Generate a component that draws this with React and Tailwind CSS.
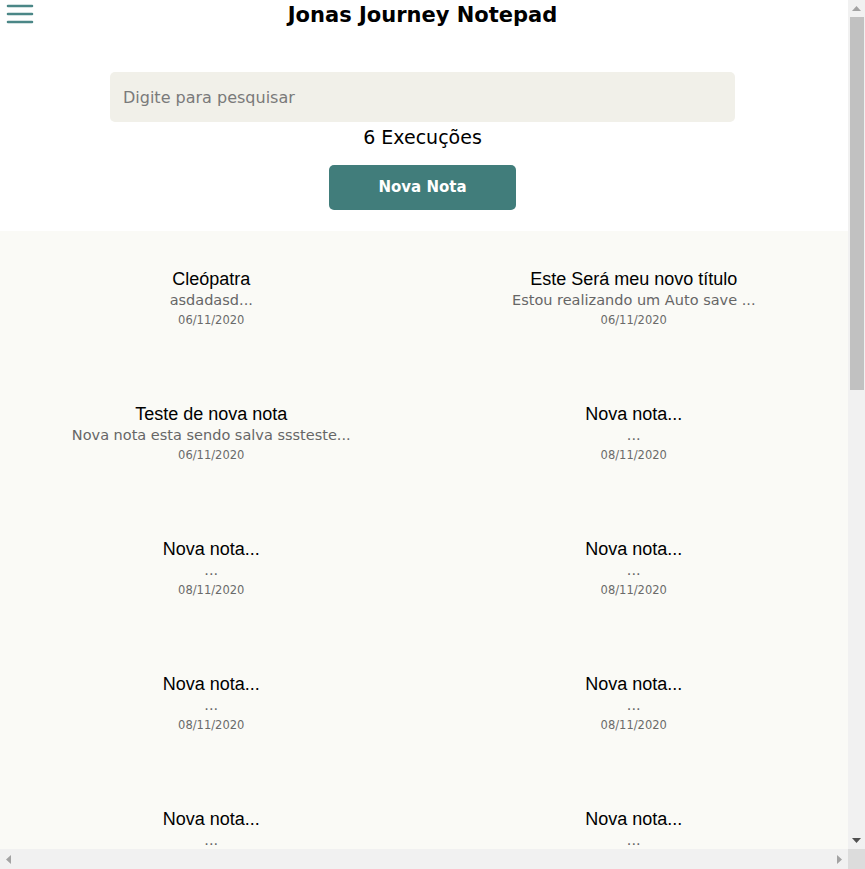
import { useState } from 'react';

const notes = [
  { id: 1, title: 'Cleópatra', body: 'asdadasd...', date: '06/11/2020' },
  { id: 2, title: 'Este Será meu novo título', body: 'Estou realizando um Auto save ...', date: '06/11/2020' },
  { id: 3, title: 'Teste de nova nota', body: 'Nova nota esta sendo salva sssteste...', date: '06/11/2020' },
  ...Array.from({ length: 19 }, (_, i) => ({
    id: i + 4,
    title: 'Nova nota...',
    body: '...',
    date: '08/11/2020',
  })),
];

const poppins = { fontFamily: '"DejaVu Sans", "Open Sans", sans-serif' };

const MenuIcon = () => (
  <svg width="28" height="22" viewBox="0 0 28 22" fill="none">
    <path d="M2 2h24M2 10h24M2 18h24" stroke="#4b8787" strokeWidth="2.6" strokeLinecap="round" />
  </svg>
);

const Arrow = ({ dir, color }) => {
  const d = {
    up: 'M0 7L4.5 2L9 7Z',
    down: 'M0 2L4.5 7L9 2Z',
    left: 'M7 0L2 4.5L7 9Z',
    right: 'M2 0L7 4.5L2 9Z',
  }[dir];
  return (
    <svg width="9" height="9" viewBox="0 0 9 9">
      <path d={d} fill={color} />
    </svg>
  );
};

const App = () => {
  const [search, setSearch] = useState('');

  const filtered = notes.filter((n) =>
    n.title.toLowerCase().includes(search.toLowerCase())
  );

  return (
    <div className="w-[865px] h-[869px] flex flex-col overflow-hidden bg-white">
      <div className="flex flex-1 min-h-0">
        {/* Page */}
        <div className="w-[848px] overflow-hidden">
          {/* Header */}
          <div className="w-[845px] flex flex-col items-center bg-white pb-[21px]">
            <div className="relative w-full flex justify-center">
              <button className="absolute left-[6px] top-[4px]">
                <MenuIcon />
              </button>
              <h1
                className="text-[21px] leading-[30px] font-semibold text-black"
                style={poppins}
              >
                Jonas Journey Notepad
              </h1>
            </div>

            <input
              type="text"
              value={search}
              onChange={(e) => setSearch(e.target.value)}
              placeholder="Digite para pesquisar"
              className="mt-[42px] w-[625px] h-[50px] rounded-[5px] bg-[#f1f0e9] px-[13px] text-[16px] text-[#333] placeholder:text-[#7a7a7a] outline-none"
              style={poppins}
            />

            <p className="text-[19px] leading-[30px] text-black" style={poppins}>
              6 Execuções
            </p>

            <button
              className="mt-[13px] w-[187px] h-[45px] rounded-[5px] bg-[#417d7b] text-white text-[15px] font-bold"
              style={poppins}
            >
              Nova Nota
            </button>
          </div>

          {/* Notes */}
          <div className="bg-[#fafaf6] pt-[37px] pb-[100px]">
            <div className="w-[845px] grid grid-cols-2">
              {filtered.map((note) => (
                <div key={note.id} className="h-[135px] flex flex-col items-center">
                  <h2 className="text-[18px] leading-[22px] text-black font-['Liberation_Sans',Arial,sans-serif]">
                    {note.title}
                  </h2>
                  <p className="text-[14.5px] leading-[20px] text-[#666]" style={poppins}>
                    {note.body}
                  </p>
                  <span className="text-[11.5px] leading-[20px] text-[#6a6a6a]" style={poppins}>
                    {note.date}
                  </span>
                </div>
              ))}
            </div>
          </div>
        </div>

        {/* Vertical scrollbar */}
        <div className="w-[17px] flex flex-col bg-[#f1f1f1]">
          <div className="h-[17px] flex items-center justify-center">
            <Arrow dir="up" color="#a3a3a3" />
          </div>
          <div className="flex-1 flex flex-col px-[1px]">
            <div className="h-[373px] ml-[1px] bg-[#c1c1c1]" />
          </div>
          <div className="h-[17px] flex items-center justify-center">
            <Arrow dir="down" color="#505050" />
          </div>
        </div>
      </div>

      {/* Horizontal scrollbar */}
      <div className="h-[20px] flex">
        <div className="w-[848px] flex items-center justify-between bg-[#f1f1f1] px-[4px]">
          <Arrow dir="left" color="#a3a3a3" />
          <Arrow dir="right" color="#a3a3a3" />
        </div>
        <div className="w-[17px] bg-[#dcdcdc]" />
      </div>
    </div>
  );
};

export default App;
